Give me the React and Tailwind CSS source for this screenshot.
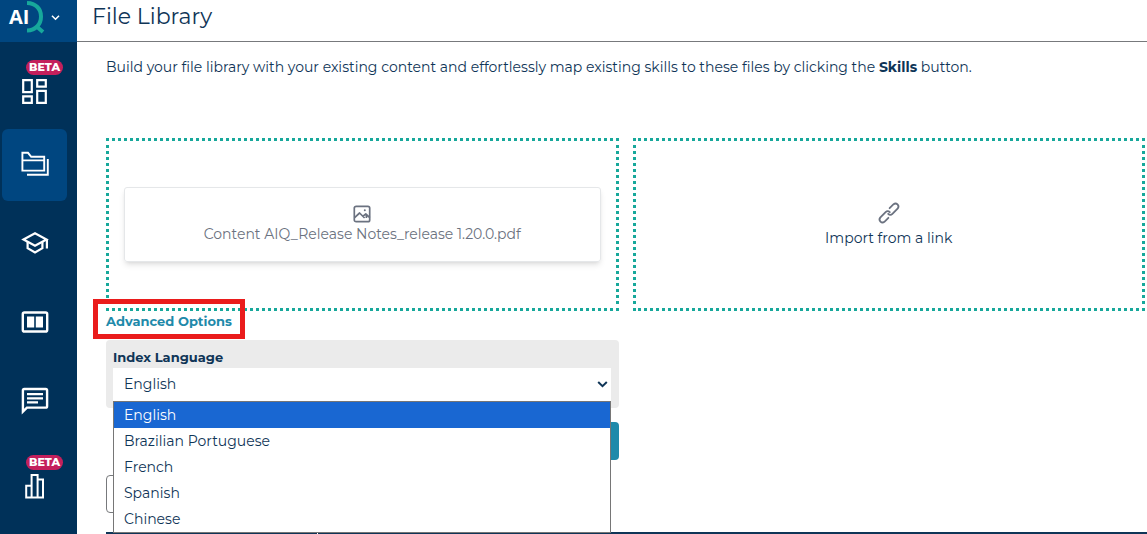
import { useState } from 'react';

const languages = ['English', 'Brazilian Portuguese', 'French', 'Spanish', 'Chinese'];

function DashboardIcon() {
  return (
    <svg width="27" height="27" viewBox="0 0 27 27" fill="none" stroke="currentColor" strokeWidth="2.2" aria-hidden="true">
      <path d="M2.2 2.2h8.6v12H2.2zM16.2 2.2h8.6v6.4h-8.6zM16.2 12.8h8.6v12h-8.6zM2.2 18.4h8.6v6.4H2.2z" />
    </svg>
  );
}

function FoldersIcon() {
  return (
    <svg width="28" height="26" viewBox="0 0 28 26" fill="none" stroke="currentColor" strokeWidth="1.9" aria-hidden="true">
      <path d="M1.4 19.6V1.8h5.6l3.2 4h13v13.8zM1.4 9.4h21.8" />
      <path d="M26.8 8v15.8H6" />
    </svg>
  );
}

function SchoolIcon() {
  return (
    <svg width="30" height="24" viewBox="0 0 30 24" fill="none" stroke="currentColor" strokeWidth="2.2" aria-hidden="true">
      <path d="M3.5 8.5 15 2.3l11.5 6.2L15 14.8z" />
      <path d="M7.6 11v6.2l7.4 4.2 7.4-4.2V11M26.9 8.4v9.2" />
    </svg>
  );
}

function ReaderIcon() {
  return (
    <svg width="28" height="22" viewBox="0 0 28 22" aria-hidden="true">
      <rect x="1.8" y="1.5" width="24.4" height="19" rx="1.6" fill="none" stroke="currentColor" strokeWidth="2.4" />
      <path d="M6 5.6h7.2v10.8H6zM14.8 5.6H22v10.8h-7.2z" fill="currentColor" />
    </svg>
  );
}

function ChatIcon() {
  return (
    <svg width="28" height="28" viewBox="0 0 28 28" fill="none" stroke="currentColor" strokeWidth="2.4" aria-hidden="true">
      <path d="M1.9 24.6V3.4Q1.9 2 3.3 2h21.4q1.4 0 1.4 1.4v15.8q0 1.4-1.4 1.4H5.9z" />
      <path d="M6 7.2h16M6 11.3h16M6 15.4h11" strokeWidth="2.2" />
    </svg>
  );
}

function ChartIcon() {
  return (
    <svg width="20" height="26" viewBox="0 0 20 26" fill="none" stroke="currentColor" strokeWidth="2" aria-hidden="true">
      <path d="M1.2 24.4V12.8h5.4v11.6zM6.6 24.4V2h6v22.4zM12.6 24.4V6.4h5.4v18z" />
    </svg>
  );
}

function PictureIcon() {
  return (
    <svg width="18" height="18" viewBox="0 0 18 18" fill="none" stroke="currentColor" strokeWidth="1.7" aria-hidden="true">
      <rect x="1.3" y="1.3" width="15.4" height="15.4" rx="1.8" />
      <path d="M1.6 12.6 6.6 8l5 5M10 11.2l2.8-2.2 4 3.6M13.4 13v-2.6" strokeLinejoin="round" />
      <circle cx="11.8" cy="5.2" r="1" fill="currentColor" stroke="none" />
    </svg>
  );
}

function LinkIcon() {
  return (
    <svg width="24" height="24" viewBox="0 0 24 24" fill="none" stroke="currentColor" strokeWidth="1.8" strokeLinecap="round" aria-hidden="true">
      <path d="M12.6 7.2 16.6 3.2a3 3 0 0 1 4.2 4.2l-5.4 5.4a3 3 0 0 1-4.2 0" />
      <path d="m11.4 16.8-4 4a3 3 0 0 1-4.2-4.2l5.4-5.4a3 3 0 0 1 4.2 0" />
    </svg>
  );
}

const navItems = [
  { label: 'Dashboard', icon: DashboardIcon, beta: true },
  { label: 'File Library', icon: FoldersIcon, active: true },
  { label: 'Courses', icon: SchoolIcon },
  { label: 'Reader', icon: ReaderIcon },
  { label: 'Chat', icon: ChatIcon },
  { label: 'Analytics', icon: ChartIcon, beta: true },
];

function Sidebar() {
  return (
    <aside className="w-[77px] shrink-0 bg-[#003159] text-white">
      <button type="button" aria-label="AIQ menu" className="flex h-[42px] w-full items-start bg-[#004680] pl-[9px]">
        <span className="w-[18px] pt-1 font-['Open_Sans',sans-serif] text-[20px] leading-[26px] font-bold">AI</span>
        <svg width="18" height="34" viewBox="0 0 18 34" fill="none" stroke="#17a89b" strokeWidth="4" aria-hidden="true">
          <path d="M0 3C9 3.2 14 9 14 16.4S9 30.4 0 30.6M9 26l7 6" />
        </svg>
        <svg className="mt-3 ml-[5px]" width="11" height="11" viewBox="0 0 10 10" fill="none" stroke="currentColor" strokeWidth="1.4" aria-hidden="true">
          <path d="m1.8 3.4 3.2 3.2 3.2-3.2" />
        </svg>
      </button>
      <nav className="flex flex-col gap-[7px] pt-2 pl-[2px]">
        {navItems.map(({ label, icon: Icon, beta, active }) => (
          <a
            key={label}
            href="#"
            aria-label={label}
            className={
              'flex h-[72px] w-[65px] flex-col items-center rounded-md ' +
              (beta ? 'pt-[10px] ' : 'justify-center pb-[3px] ') +
              (active ? 'bg-[#004680]' : '')
            }
          >
            {beta && (
              <span className="mb-[3px] ml-5 rounded-full bg-[#c4205c] px-[3px] text-[11px] leading-[15px] font-extrabold">BETA</span>
            )}
            <Icon />
          </a>
        ))}
      </nav>
    </aside>
  );
}

export default function App() {
  const [language, setLanguage] = useState('English');
  return (
    <div className="flex h-screen overflow-hidden bg-white font-['Montserrat','Inter',sans-serif] text-[#0f3557]">
      <Sidebar />
      <main className="min-w-0 flex-1">
        <header className="h-[42px] border-b border-[#77797c] pl-[15px]">
          <h1 className="text-[22px] leading-[34px]">File Library</h1>
        </header>
        <div className="pr-[2px] pl-[29px]">
          <p className="pt-[15px] text-[14px] leading-5">
            Build your file library with your existing content and effortlessly map existing skills to these files by clicking the <b className="font-bold">Skills</b> button.
          </p>
          <div className="mt-[61px] grid grid-cols-2 gap-[14px]">
            <section className="flex h-[173px] flex-col justify-center border-3 border-dotted border-[#17a89b] px-[15px]">
              <div className="flex h-[75px] flex-col items-center justify-center gap-px rounded-[3px] border border-[#e5e7e9] text-[#6b7280] shadow-md">
                <PictureIcon />
                <span className="text-[14px] leading-5">Content AIQ_Release Notes_release 1.20.0.pdf</span>
              </div>
            </section>
            <button type="button" className="flex h-[173px] flex-col items-center justify-center gap-[3px] border-3 border-dotted border-[#17a89b]">
              <span className="text-[#6b7280]"><LinkIcon /></span>
              <span className="text-[14px] leading-5">Import from a link</span>
            </button>
          </div>
          <div className="grid grid-cols-2 gap-[14px]">
            <div>
              <div className="relative flex h-[29px] items-start">
                <a href="#" className="text-[13px] leading-[21px] font-bold text-[#1f8aaa]">Advanced Options</a>
                <span className="pointer-events-none absolute -top-3 -left-[13px] h-10 w-[152px] border-5 border-[#ea1c1c]" />
              </div>
              <div className="relative h-[68px] rounded bg-[#ebebeb] pt-[7px] pr-2 pl-[7px]">
                <label htmlFor="language" className="block text-[13px] leading-[21px] font-bold">Index Language</label>
                <div className="relative">
                  <select
                    id="language"
                    value={language}
                    onChange={(e) => setLanguage(e.target.value)}
                    className="block h-[33px] w-full appearance-none bg-white pl-[11px] text-[14px]"
                  >
                    {languages.map((name) => <option key={name}>{name}</option>)}
                  </select>
                  <svg className="pointer-events-none absolute top-3 right-[3px]" width="11" height="9" viewBox="0 0 11 9" fill="none" stroke="currentColor" strokeWidth="2" aria-hidden="true">
                    <path d="m1.2 2 4.3 4.2L9.8 2" />
                  </svg>
                  <ul role="listbox" aria-label="Index Language" className="absolute inset-x-0 top-[33px] z-10 border border-[#767676] bg-white text-[14px] leading-[26px]">
                    {languages.map((name) => (
                      <li
                        key={name}
                        role="option"
                        aria-selected={name === language}
                        onClick={() => setLanguage(name)}
                        className={name === language ? 'bg-[#1967d2] pl-[10px] text-white' : 'pl-[10px]'}
                      >
                        {name}
                      </li>
                    ))}
                  </ul>
                </div>
              </div>
              <button type="button" aria-label="Upload" className="mt-[14px] ml-auto block h-[38px] w-32 rounded bg-[#1f8aaa]" />
              <input type="search" aria-label="Search files" className="mt-[15px] block h-[38px] w-[400px] max-w-full rounded border border-[#77797c]" />
            </div>
          </div>
        </div>
        <div className="mt-[19px] ml-[29px] flex h-10 gap-px">
          <div className="w-[211px] bg-[#0f3557]" />
          <div className="flex-1 bg-[#0f3557]" />
        </div>
      </main>
    </div>
  );
}
